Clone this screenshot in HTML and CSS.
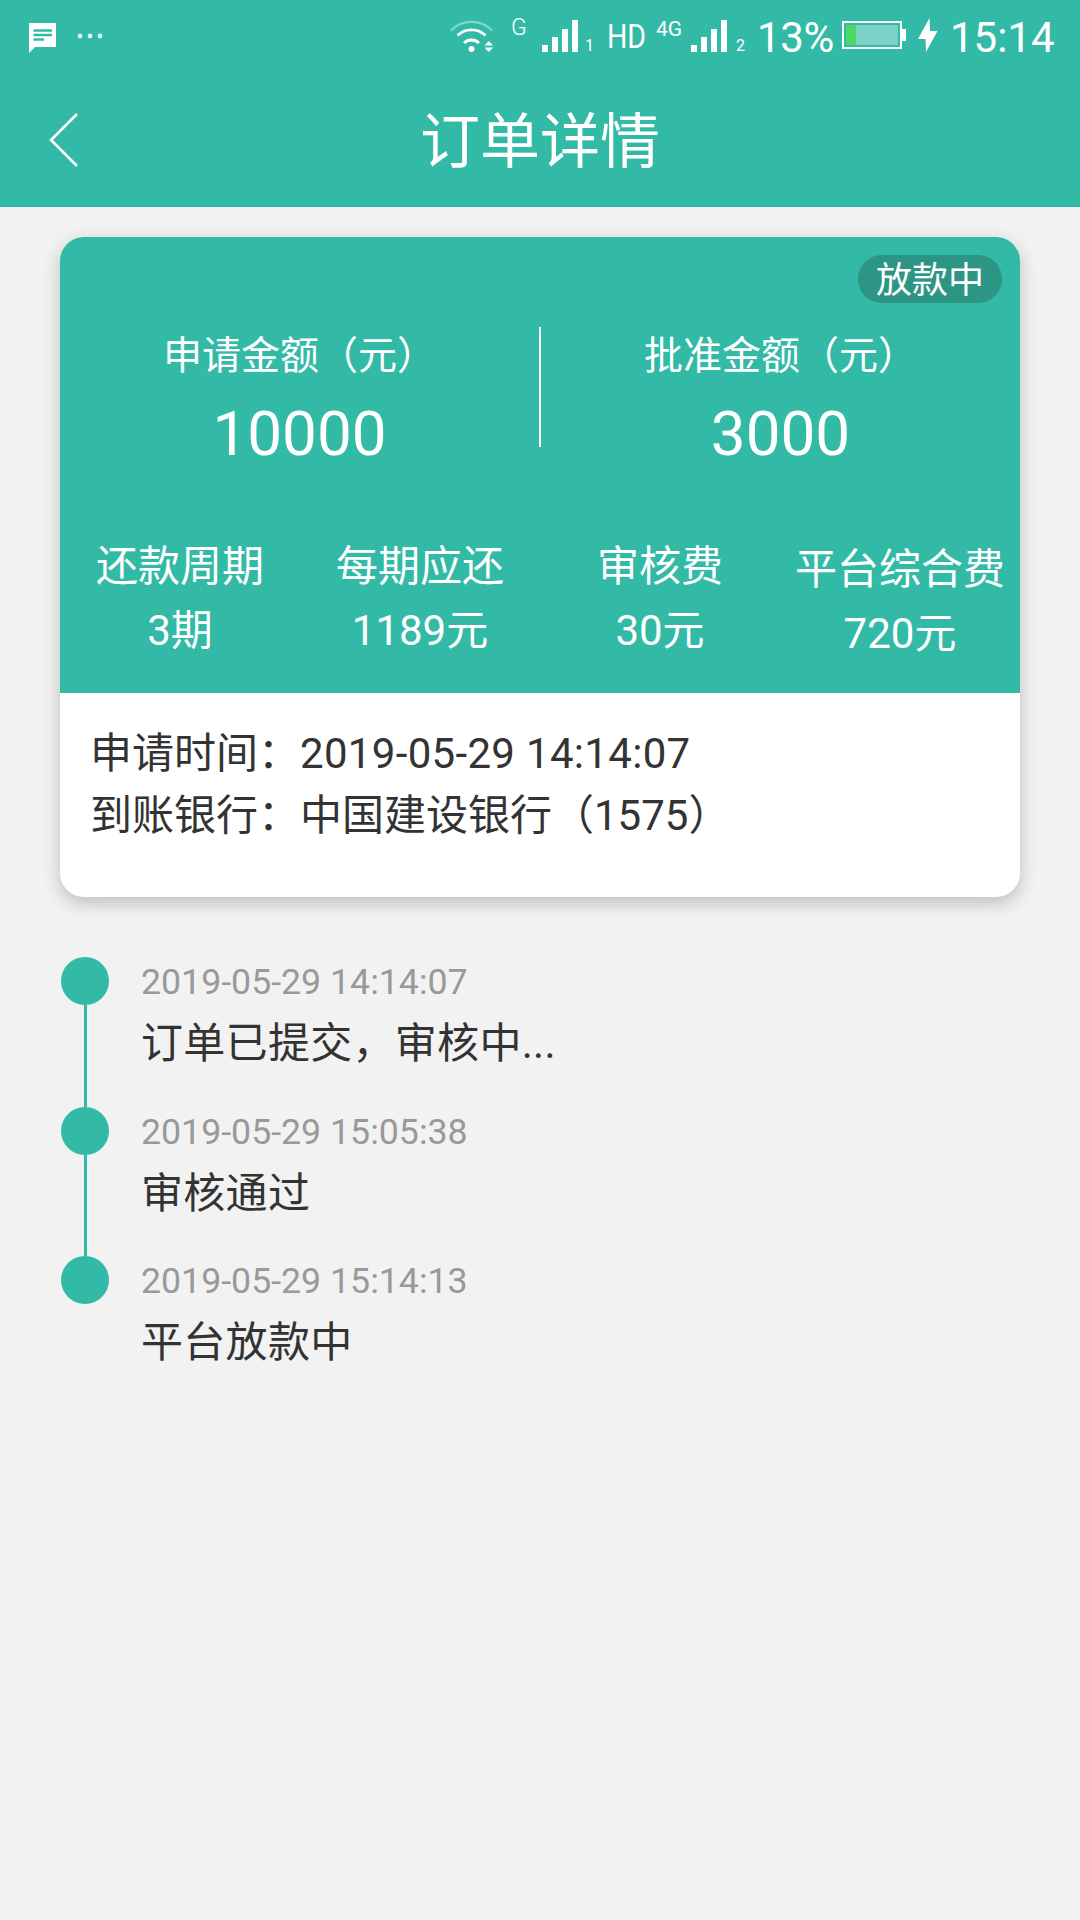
FILE: index.html
```html
<!DOCTYPE html>
<html lang="zh-CN">
<head>
<meta charset="utf-8">
<title>订单详情</title>
<link rel="stylesheet" href="styles.css">
</head>
<body>
<div class="app">
  <header class="header">
    <div class="statusbar">
      <svg class="sb-msg" width="27" height="30" viewBox="0 0 27 30"><path d="M0 0H27V24H6L0 30Z" fill="#fff"/><path d="M4.500 7.500H23M4.500 12H23M4.500 16.500H15" stroke="#32BAA6" stroke-width="2.400" fill="none"/></svg>
      <svg class="sb-dots" width="26" height="6" viewBox="0 0 26 6"><circle cx="3" cy="3" r="2.400" fill="#dff5f1"/><circle cx="13" cy="3" r="2.400" fill="#dff5f1"/><circle cx="23" cy="3" r="2.400" fill="#dff5f1"/></svg>
      <svg class="sb-wifi" width="43" height="33" viewBox="0 0 43 33"><path d="M1 10.500C12 -1 31 -1 42 10.500" stroke="#fff" stroke-opacity=".4" stroke-width="2.400" fill="none"/><path d="M7.500 15.500C15 8 28 8 35.500 15.500" stroke="#fff" stroke-width="2.800" fill="none"/><path d="M14 23C18 19 25 19 29 23" stroke="#fff" stroke-width="2.800" fill="none"/><circle cx="21.500" cy="29" r="3" fill="#fff"/><path d="M34.500 25.500L38.800 21L43 25.500ZM34.500 27.500H43L38.800 32Z" fill="#fff"/></svg>
      <span class="sb-g">G</span>
      <svg class="sb-signal-a" width="36" height="32" viewBox="0 0 36 32"><path d="M0 25H6V32H0ZM10 17H16V32H10ZM20 9H26V32H20ZM30 0H36V32H30Z" fill="#fff"/></svg>
      <span class="sb-sub sb-sub-a">1</span>
      <span class="sb-hd">HD</span>
      <span class="sb-4g">4G</span>
      <svg class="sb-signal-b" width="36" height="32" viewBox="0 0 36 32"><path d="M0 25H6V32H0ZM10 17H16V32H10ZM20 9H26V32H20ZM30 0H36V32H30Z" fill="#fff"/></svg>
      <span class="sb-sub sb-sub-b">2</span>
      <span class="sb-pct">13%</span>
      <svg class="sb-batt" width="64" height="28" viewBox="0 0 64 28"><rect x="1" y="1" width="58" height="26" fill="none" stroke="#fff" stroke-width="2"/><rect x="4" y="4" width="52" height="20" fill="#fff" fill-opacity=".35"/><rect x="4" y="4" width="10" height="20" fill="#4CD964"/><rect x="60" y="8" width="4" height="12" fill="#fff"/></svg>
      <svg class="sb-bolt" width="20" height="34" viewBox="0 0 20 34"><path d="M11.500 0L0 21H7.500L8 34L19.500 13H12Z" fill="#fff"/></svg>
      <span class="sb-time">15:14</span>
    </div>
    <nav class="navbar">
      <svg class="back" width="29" height="54" viewBox="0 0 29 54"><path d="M28 1L2 27L28 53" fill="none" stroke="#fff" stroke-width="2.600"/></svg>
      <h1 class="title">订单详情</h1>
    </nav>
  </header>

  <section class="card">
    <div class="card-top">
      <div class="badge-row"><span class="badge">放款中</span></div>
      <div class="amounts">
        <div class="amount">
          <div class="amount-label">申请金额（元）</div>
          <div class="amount-value">10000</div>
        </div>
        <div class="divider"></div>
        <div class="amount">
          <div class="amount-label">批准金额（元）</div>
          <div class="amount-value">3000</div>
        </div>
      </div>
      <div class="stats">
        <div class="stat"><div>还款周期</div><div class="stat-value">3期</div></div>
        <div class="stat"><div>每期应还</div><div class="stat-value">1189元</div></div>
        <div class="stat"><div>审核费</div><div class="stat-value">30元</div></div>
        <div class="stat stat-low"><div>平台综合费</div><div class="stat-value">720元</div></div>
      </div>
    </div>
    <div class="card-info">
      <div>申请时间：<span class="info-date">2019-05-29 14:14:07</span></div>
      <div>到账银行：中国建设银行（1575）</div>
    </div>
  </section>

  <section class="timeline">
    <div class="item">
      <div class="marker"><span class="dot"></span><span class="line"></span></div>
      <div class="item-body"><div class="item-time">2019-05-29 14:14:07</div><div class="item-text">订单已提交，审核中...</div></div>
    </div>
    <div class="item">
      <div class="marker"><span class="dot"></span><span class="line"></span></div>
      <div class="item-body"><div class="item-time">2019-05-29 15:05:38</div><div class="item-text">审核通过</div></div>
    </div>
    <div class="item">
      <div class="marker"><span class="dot"></span></div>
      <div class="item-body"><div class="item-time">2019-05-29 15:14:13</div><div class="item-text">平台放款中</div></div>
    </div>
  </section>
</div>
</body>
</html>
```
FILE: styles.css
```css
* { box-sizing: border-box; }
html, body { margin: 0; padding: 0; }
body {
  width: 1080px;
  height: 1920px;
  overflow: hidden;
  background: #f2f2f2;
  font-family: Roboto, "Noto Sans CJK SC", sans-serif;
}
.app { width: 1080px; height: 1920px; background: #f2f2f2; }

.header { height: 207px; background: #32baa6; color: #fff; border-bottom: 1px solid #2fae9b; }

.statusbar { display: flex; align-items: flex-start; height: 70px; }
.statusbar svg, .statusbar span { display: block; flex: none; white-space: nowrap; }
.sb-msg { margin: 23px 0 0 29px; }
.sb-dots { margin: 33px 0 0 21px; }
.sb-wifi { margin: 20px 0 0 347px; }
.sb-g { margin: 17px 0 0 18px; width: 17px; font-size: 23px; line-height: 22px; font-weight: 300; }
.sb-signal-a { margin: 20px 0 0 14px; }
.sb-sub { font-size: 16px; line-height: 16px; margin-top: 38px; width: 10px; }
.sb-sub-a { margin-left: 7px; }
.sb-hd { margin: 19px 0 0 12px; width: 41px; font-size: 34px; line-height: 34px; font-weight: 400; transform: scaleX(.84); transform-origin: left center; }
.sb-4g { margin: 19px 0 0 8px; width: 27px; font-size: 21px; line-height: 20px; font-weight: 400; }
.sb-signal-b { margin: 20px 0 0 8px; }
.sb-sub-b { margin-left: 9px; }
.sb-pct { margin: 17px 0 0 11px; width: 74px; font-size: 42px; line-height: 42px; font-weight: 400; letter-spacing: -.3px; }
.sb-batt { margin: 21px 0 0 11px; }
.sb-bolt { margin: 18px 0 0 12px; }
.sb-time { margin: 17px 0 0 12px; font-size: 42px; line-height: 42px; font-weight: 400; }

.navbar { display: grid; grid-template-columns: 1fr auto 1fr; align-items: center; height: 137px; }
.back { margin-left: 49px; margin-top: 2px; }
.title { margin: 8px 0 0; font-size: 60px; font-weight: 400; line-height: 80px; }

.card {
  margin: 30px 60px 0;
  height: 660px;
  border-radius: 24px;
  overflow: hidden;
  background: #fff;
  box-shadow: 0 6px 18px rgba(0, 0, 0, .22);
}
.card-top { height: 456px; background: #32baa6; color: #fff; padding-top: 18px; }
.badge-row { display: flex; justify-content: flex-end; padding-right: 18px; }
.badge { width: 144px; height: 48px; border-radius: 24px; background: #2d9583; font-size: 36px; line-height: 52px; text-align: center; }
.amounts { display: grid; grid-template-columns: 1fr 2px 1fr; margin-top: 24px; }
.amount { text-align: center; }
.amount-label { font-size: 39px; line-height: 58px; }
.amount-value { margin-top: 14px; font-size: 62px; line-height: 70px; }
.divider { height: 120px; background: #fff; }
.stats { display: grid; grid-template-columns: repeat(4, 240px); margin-top: 68px; font-size: 42px; line-height: 60px; text-align: center; }
.stat-value { margin-top: 4px; }
.stat-low { padding-top: 3px; }
.card-info { padding: 30px 32px 0 30px; font-size: 42px; line-height: 62px; color: #333; }
.info-date { letter-spacing: .32px; }

.timeline { margin: 60px 0 0 61px; }
.item { display: flex; height: 149.5px; }
.marker { display: flex; flex-direction: column; align-items: center; width: 48px; }
.dot { flex: none; width: 48px; height: 48px; border-radius: 50%; background: #32baa6; }
.line { flex: 1; width: 3px; background: #32baa6; }
.item-body { margin-left: 32px; }
.item-time { font-size: 35.700px; line-height: 50px; color: #999; }
.item-text { margin-top: 1px; font-size: 42px; line-height: 72px; color: #333; letter-spacing: .3px; }
```
